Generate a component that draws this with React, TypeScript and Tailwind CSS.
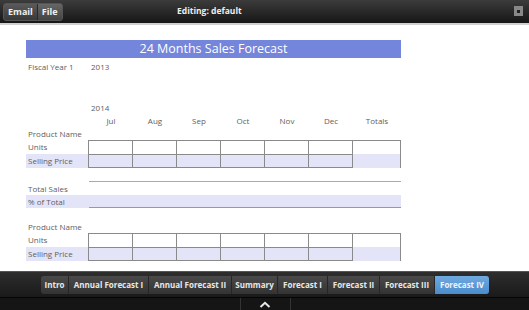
import React from "react";

const months = ["Jul", "Aug", "Sep", "Oct", "Nov", "Dec"];
const tabs: [string, string][] = [
  ["Intro", "w-[28px]"],
  ["Annual Forecast I", "w-[80px]"],
  ["Annual Forecast II", "w-[83px]"],
  ["Summary", "w-[46px]"],
  ["Forecast I", "w-[50px]"],
  ["Forecast II", "w-[52px]"],
  ["Forecast III", "w-[55px]"],
  ["Forecast IV", "w-[54px]"],
];

function GridRows() {
  return (
    <div className="flex flex-col w-[375px]">
      <div className="flex h-[14px]">
        <div className="w-[63px] pl-[2px] leading-[14px]">Units</div>
        <div className="flex border-t border-l border-[#8a8a8a]">
          {[0, 1, 2, 3, 4, 5].map((i) => (
            <div key={i} className="w-[44px] h-[13px] border-r border-[#8a8a8a]" />
          ))}
          <div className="w-[48px] h-[13px] border-r border-[#8a8a8a]" />
        </div>
      </div>
      <div className="flex h-[14px] bg-[#e4e4f8]">
        <div className="w-[63px] pl-[2px] leading-[14px]">Selling Price</div>
        <div className="flex border-t border-l border-b border-[#8a8a8a] h-[14px]">
          {[0, 1, 2, 3, 4, 5].map((i) => (
            <div key={i} className="w-[44px] h-full border-r border-[#8a8a8a]" />
          ))}
          <div className="w-[48px] h-[14px] border-r border-[#8a8a8a] -mt-px bg-[#e4e4f8]" />
        </div>
      </div>
    </div>
  );
}

export default function App() {
  return (
    <div className="w-[529px] h-[310px] overflow-hidden bg-white flex flex-col" style={{ fontFamily: '"Open Sans", "DejaVu Sans", sans-serif' }}>
      {/* top bar */}
      <div className="h-[23px] bg-gradient-to-b from-[#3c3c3c] to-[#171717] flex items-center relative shrink-0">
        <div className="ml-[3px] flex h-[18px] rounded-[3px] border border-[#555] bg-gradient-to-b from-[#5a5a5a] to-[#3a3a3a] text-[#f0f0f0] text-[9px] font-bold overflow-hidden">
          <div className="px-[4px] leading-[16px] border-r border-[#2a2a2a]">Email</div>
          <div className="px-[4px] leading-[16px] bg-gradient-to-b from-[#666] to-[#444]">File</div>
        </div>
        <div className="absolute left-[177px] top-[5px] text-[8.5px] font-bold text-[#eeeeee] whitespace-nowrap">Editing: default</div>
        <div className="absolute right-[6px] top-[6px] w-[9px] h-[10px] bg-[#888] flex items-center justify-center">
          <div className="w-[3px] h-[3px] bg-[#222]" />
        </div>
      </div>
      <div className="h-[2px] bg-[#d0d0d0] shrink-0" />

      {/* content */}
      <div className="flex-1 pl-[26px] pt-[15px] text-[8px] text-[#606060]">
        <div className="w-[375px] h-[18px] bg-[#7485dc] text-white text-[12.5px] text-center leading-[18px]">
          24 Months Sales Forecast
        </div>
        <div className="flex mt-[3px] h-[12px] leading-[12px]">
          <div className="w-[65px] pl-[2px]">Fiscal Year 1</div>
          <div>2013</div>
        </div>
        <div className="h-[29px]" />
        <div className="flex h-[12px] leading-[12px]">
          <div className="w-[65px]" />
          <div>2014</div>
        </div>
        <div className="flex h-[14px] leading-[14px] ml-[63px]">
          {months.map((m) => (
            <div key={m} className="w-[44px] text-center">{m}</div>
          ))}
          <div className="w-[48px] text-center">Totals</div>
        </div>
        <div className="h-[12px] leading-[12px] pl-[2px]">Product Name</div>
        <GridRows />
        <div className="h-[13px]" />
        <div className="ml-[63px] w-[312px] h-[1px] bg-[#aaaaaa]" />
        <div className="h-[12px] leading-[12px] pl-[2px] mt-[1px]">Total Sales</div>
        <div className="w-[375px] h-[13px] bg-[#e4e4f8] leading-[13px] pl-[2px] relative">
          % of Total
          <div className="absolute left-[63px] bottom-0 w-[312px] h-[1px] bg-[#999]" />
        </div>
        <div className="h-[13px]" />
        <div className="h-[12px] leading-[12px] pl-[2px]">Product Name</div>
        <GridRows />
      </div>

      {/* bottom bar */}
      <div className="h-[26px] bg-gradient-to-b from-[#2e2e2e] to-[#1a1a1a] border-t border-[#555] flex items-center shrink-0">
        <div className="ml-[41px] flex h-[18px] rounded-[3px] overflow-hidden text-[8px] font-bold text-[#e8e8e8] bg-gradient-to-b from-[#4a4a4a] to-[#333]">
          {tabs.map(([t, w], i) => (
            <div
              key={t}
              className={
                i === tabs.length - 1
                  ? `${w} whitespace-nowrap text-center leading-[18px] bg-gradient-to-b from-[#6fa9e0] to-[#4a8ccc] text-[#eef4ff]`
                  : `${w} whitespace-nowrap text-center leading-[18px] border-r border-[#262626]`
              }
            >
              {t}
            </div>
          ))}
        </div>
      </div>
      <div className="h-[13px] bg-[#151515] border-t border-[#050505] flex shrink-0 relative">
        <div className="absolute left-[240px] top-0 h-full w-px bg-[#333]" />
        <div className="absolute left-[290px] top-0 h-full w-px bg-[#333]" />
        <svg className="absolute left-[259px] top-[3px]" width="12" height="7" viewBox="0 0 12 7">
          <path d="M1.5 6 L6 1.8 L10.5 6" stroke="#e8e8e8" strokeWidth="2" fill="none" />
        </svg>
      </div>
    </div>
  );
}
